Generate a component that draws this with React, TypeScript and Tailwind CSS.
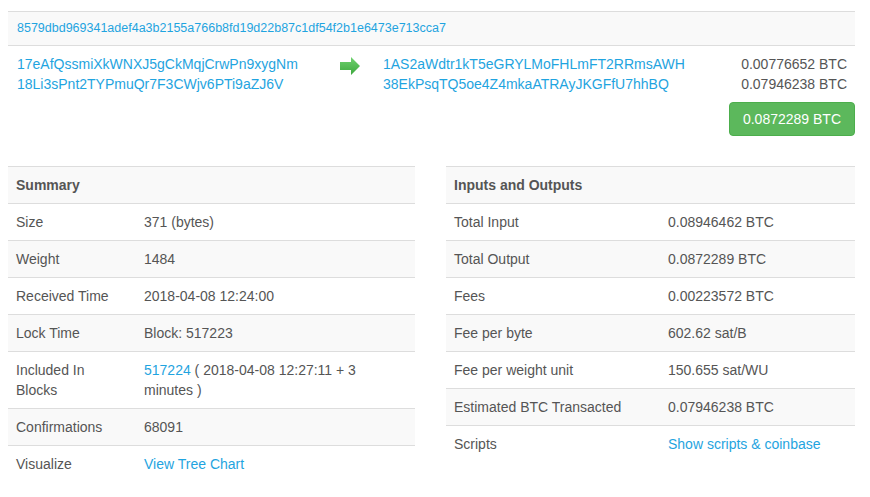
import React from 'react';

const LINK = 'text-[#1fa4e0]';

const Row: React.FC<{ label: React.ReactNode; striped: boolean; labelW: string; children: React.ReactNode }> = ({ label, striped, labelW, children }) => (
  <tr className={`border-t border-[#dddddd] ${striped ? 'bg-[#f9f9f9]' : 'bg-white'}`}>
    <td className={`${labelW} px-2 py-2 align-top leading-5`}>{label}</td>
    <td className="px-2 py-2 align-top leading-5">{children}</td>
  </tr>
);

const Arrow: React.FC = () => (
  <svg width="21" height="18" viewBox="0 0 21 18">
    <defs>
      <linearGradient id="ag" x1="0" y1="0" x2="0" y2="1">
        <stop offset="0" stopColor="#6fd26f" />
        <stop offset="1" stopColor="#3ea83e" />
      </linearGradient>
    </defs>
    <polygon points="0,5 11,5 11,0 20,9 11,18 11,13 0,13" fill="url(#ag)" />
  </svg>
);

const App: React.FC = () => {
  const summary: [React.ReactNode, React.ReactNode][] = [
    ['Size', '371 (bytes)'],
    ['Weight', '1484'],
    ['Received Time', '2018-04-08 12:24:00'],
    ['Lock Time', 'Block: 517223'],
    ['Included In Blocks', <><a className={LINK}>517224</a> ( 2018-04-08 12:27:11 + 3 minutes )</>],
    ['Confirmations', '68091'],
    ['Visualize', <a className={LINK}>View Tree Chart</a>],
  ];

  const io: [React.ReactNode, React.ReactNode][] = [
    ['Total Input', '0.08946462 BTC'],
    ['Total Output', '0.0872289 BTC'],
    ['Fees', '0.00223572 BTC'],
    ['Fee per byte', '602.62 sat/B'],
    ['Fee per weight unit', '150.655 sat/WU'],
    ['Estimated BTC Transacted', '0.07946238 BTC'],
    ['Scripts', <a className={LINK}>Show scripts &amp; coinbase</a>],
  ];

  return (
    <div className="min-h-[497px] bg-white pt-[11px] pl-2 pr-[15px] text-[14px] text-[#555555]" style={{ fontFamily: '"Liberation Sans", Arial, sans-serif' }}>
      {/* Transaction hash + in/out */}
      <table className="w-full border-collapse">
        <tbody>
          <tr className="border-t border-[#dddddd] bg-[#f9f9f9]">
            <td colSpan={4} className={`pl-[9px] py-2 text-[12.5px] leading-[17px] ${LINK}`}>
              8579dbd969341adef4a3b2155a766b8fd19d22b87c1df54f2b1e6473e713cca7
            </td>
          </tr>
          <tr className="border-t border-[#dddddd]">
            <td className="w-[321px] pl-[9px] py-2 align-top leading-5">
              <div><a className={LINK}>17eAfQssmiXkWNXJ5gCkMqjCrwPn9xygNm</a></div>
              <div><a className={LINK}>18Li3sPnt2TYPmuQr7F3CWjv6PTi9aZJ6V</a></div>
            </td>
            <td className="w-[52px] py-2 align-top">
              <div className="mt-[3px] flex justify-center pr-[10px]">
                <Arrow />
              </div>
            </td>
            <td className="py-2 pl-[2px] align-top leading-5">
              <div><a className={LINK}>1AS2aWdtr1kT5eGRYLMoFHLmFT2RRmsAWH</a></div>
              <div><a className={LINK}>38EkPsqTQ5oe4Z4mkaATRAyJKGFfU7hhBQ</a></div>
            </td>
            <td className="py-2 pr-2 text-right align-top leading-5">
              <div>0.00776652 BTC</div>
              <div>0.07946238 BTC</div>
            </td>
          </tr>
        </tbody>
      </table>
      <div className="flex justify-end">
        <button className="rounded-[4px] border border-[#4cae4c] bg-[#5cb85c] px-[13px] py-[6px] text-[14px] leading-5 text-white">
          0.0872289 BTC
        </button>
      </div>

      {/* Summary / Inputs and Outputs */}
      <div className="mt-[30px] flex justify-between">
        <table className="w-[407px] border-collapse self-start">
          <tbody>
            <tr className="border-t border-[#dddddd] bg-[#f9f9f9]">
              <th colSpan={2} className="px-2 py-2 text-left font-bold leading-5">Summary</th>
            </tr>
            {summary.map(([l, v], i) => (
              <Row key={i} label={l} striped={i % 2 === 1} labelW="w-[128px]">{v}</Row>
            ))}
          </tbody>
        </table>
        <table className="w-[409px] border-collapse self-start">
          <tbody>
            <tr className="border-t border-[#dddddd] bg-[#f9f9f9]">
              <th colSpan={2} className="px-2 py-2 text-left font-bold leading-5">Inputs and Outputs</th>
            </tr>
            {io.map(([l, v], i) => (
              <Row key={i} label={l} striped={i % 2 === 1} labelW="w-[214px]">{v}</Row>
            ))}
          </tbody>
        </table>
      </div>
    </div>
  );
};

export default App;
